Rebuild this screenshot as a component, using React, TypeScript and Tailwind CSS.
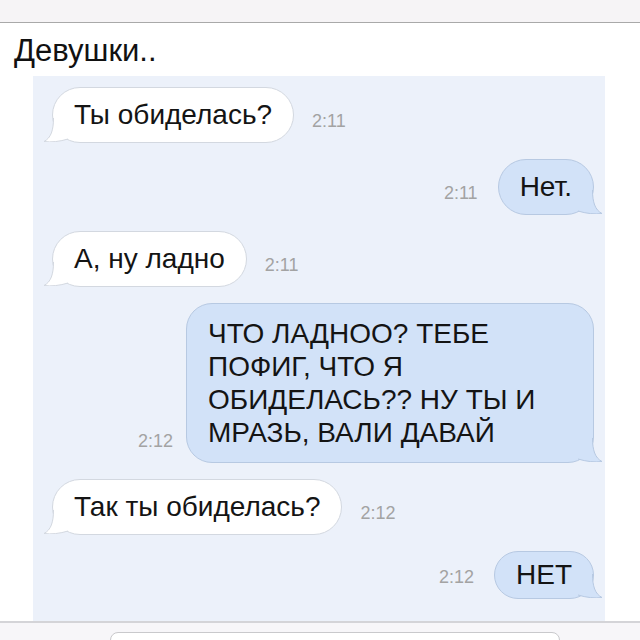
type Msg = { text: React.ReactNode; time: string; out: boolean; h?: string; big?: boolean }

const messages: Msg[] = [
  { text: 'Ты обиделась?', time: '2:11', out: false },
  { text: 'Нет.', time: '2:11', out: true },
  { text: 'А, ну ладно', time: '2:11', out: false },
  {
    text: (
      <>
        ЧТО ЛАДНОО? ТЕБЕ<br />ПОФИГ, ЧТО Я<br />ОБИДЕЛАСЬ?? НУ ТЫ И<br />МРАЗЬ, ВАЛИ ДАВАЙ
      </>
    ),
    time: '2:12',
    out: true,
    big: true,
  },
  { text: 'Так ты обиделась?', time: '2:12', out: false },
  { text: 'НЕТ', time: '2:12', out: true, h: 'h-[48px]' },
]

function Tail({ out }: { out: boolean }) {
  const fill = out ? '#d2e2f8' : '#ffffff'
  const stroke = out ? '#b7c9e2' : '#d3d8e0'
  return (
    <svg
      width="24"
      height="24"
      viewBox="0 0 24 24"
      className={out ? 'absolute right-[-9px] bottom-0' : 'absolute left-[-9px] bottom-0 -scale-x-100'}
    >
      <path d="M14.5 0 C14.5 12 17 20 24 23.5 C17 24.5 8 23.5 0 21 L0 0 Z" fill={fill} />
      <path d="M14.5 0 C14.5 12 17 20 24 23.5 C17 24.5 8 23.5 0 21" fill="none" stroke={stroke} strokeWidth="1" />
    </svg>
  )
}

function Row({ m }: { m: Msg }) {
  const time = (
    <span className="text-[18px] leading-[20px] text-[#a3a3a3] mb-[12px]">{m.time}</span>
  )
  const bubble = (
    <div
      className={
        'relative border text-[28px] text-[#141414] ' +
        (m.out ? 'bg-[#d2e2f8] border-[#b7c9e2] ' : 'bg-white border-[#d3d8e0] ') +
        (m.big
          ? 'rounded-[26px] w-[408px] px-[21px] py-[13px] leading-[33px]'
          : 'rounded-[28px] px-[21px] flex items-center leading-none ' + (m.h ?? 'h-[56px]'))
      }
    >
      <Tail out={m.out} />
      <span className="relative">{m.text}</span>
    </div>
  )
  return m.out ? (
    <div className={'flex justify-end items-end pr-[11px] ' + (m.big ? 'gap-[13px]' : 'gap-[20px]')}>
      {time}
      {bubble}
    </div>
  ) : (
    <div className="flex items-end pl-[19px] gap-[18px]">
      {bubble}
      {time}
    </div>
  )
}

export default function App() {
  return (
    <div className="w-[640px] h-[640px] bg-white overflow-hidden font-['Liberation_Sans',Arial,sans-serif]">
      <div className="h-[23px] bg-[#f6f4f6] border-b border-[#a9a9a9]" />
      <div className="h-[53px] pl-[14px] pt-[12px] text-[31px] leading-none text-[#111]">Девушки..</div>
      <div className="ml-[33px] w-[572px] h-[545px] bg-[#ecf1fa] pt-[11px] flex flex-col gap-[16px]">
        {messages.map((m, i) => (
          <Row key={i} m={m} />
        ))}
      </div>
      <div className="h-[19px] bg-[#f7f6f9] border-t-2 border-[#d4d4d8] pt-[9px]">
        <div className="ml-[110px] w-[450px] h-[20px] bg-white border border-[#c9c9cc] rounded-[8px]" />
      </div>
    </div>
  )
}
